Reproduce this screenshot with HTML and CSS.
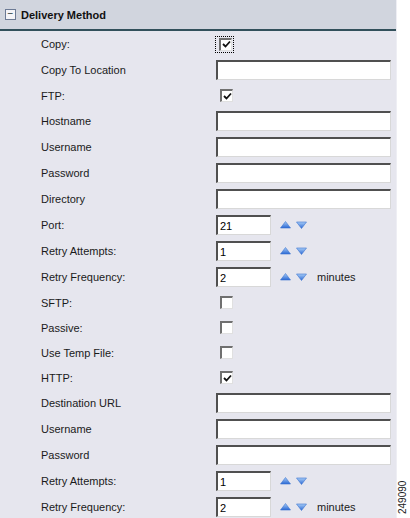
FILE: index.html
```html
<!DOCTYPE html>
<html lang="en">
<head>
    <meta charset="UTF-8">
    <title>Delivery Method</title>
    <link rel="stylesheet" href="styles.css">
</head>
<body>
    <div class="panel">
        <div class="panel-header">
            <span class="toggle">&minus;</span>
            <span class="title">Delivery Method</span>
        </div>
        <div class="rows">
            <div class="row"><label>Copy:</label><span class="focus"><span class="check on"></span></span></div>
            <div class="row"><label>Copy To Location</label><input type="text" class="wide"></div>
            <div class="row short"><label>FTP:</label><span class="check on"></span></div>
            <div class="row"><label>Hostname</label><input type="text" class="wide"></div>
            <div class="row"><label>Username</label><input type="text" class="wide"></div>
            <div class="row"><label>Password</label><input type="text" class="wide"></div>
            <div class="row"><label>Directory</label><input type="text" class="wide"></div>
            <div class="row"><label>Port:</label><input type="text" class="small" value="21"><span class="spin"></span></div>
            <div class="row"><label>Retry Attempts:</label><input type="text" class="small" value="1"><span class="spin"></span></div>
            <div class="row"><label>Retry Frequency:</label><input type="text" class="small" value="2"><span class="spin"></span><span class="unit">minutes</span></div>
            <div class="row short"><label>SFTP:</label><span class="check"></span></div>
            <div class="row short"><label>Passive:</label><span class="check"></span></div>
            <div class="row short"><label>Use Temp File:</label><span class="check"></span></div>
            <div class="row short"><label>HTTP:</label><span class="check on"></span></div>
            <div class="row"><label>Destination URL</label><input type="text" class="wide"></div>
            <div class="row"><label>Username</label><input type="text" class="wide"></div>
            <div class="row"><label>Password</label><input type="text" class="wide"></div>
            <div class="row"><label>Retry Attempts:</label><input type="text" class="small" value="1"><span class="spin"></span></div>
            <div class="row"><label>Retry Frequency:</label><input type="text" class="small" value="2"><span class="spin"></span><span class="unit">minutes</span></div>
        </div>
    </div>
    <div class="figure-id">249090</div>

    <script>
        // arrow pair for each spinner
        var arrows = '<svg width="30" height="10" viewBox="0 0 30 10">' +
            '<defs><linearGradient id="g" x1="0" y1="0" x2="0" y2="1">' +
            '<stop offset="0" stop-color="#a8ccf6"/><stop offset="1" stop-color="#2a68d4"/></linearGradient></defs>' +
            '<path d="M0.5 8 L5.5 1.5 L10.5 8 Z" fill="url(#g)" stroke="#3a74d0" stroke-width="0.6"/>' +
            '<path d="M16.5 2 L21.5 8.5 L26.5 2 Z" fill="url(#g)" stroke="#3a74d0" stroke-width="0.6"/>' +
            '</svg>';
        document.querySelectorAll('.spin').forEach(function(el) {
            el.innerHTML = arrows;
        });
        document.querySelectorAll('.check.on').forEach(function(el) {
            el.innerHTML = '<svg width="9" height="9" viewBox="0 0 9 9"><path d="M1 4 L3.5 6.5 L8 1.5" fill="none" stroke="#111" stroke-width="1.8"/></svg>';
        });
    </script>
</body>
</html>
```

FILE: styles.css
```css
body {
    margin: 0;
    background-color: #fff;
    font-family: "Liberation Sans", Arial, sans-serif;
    font-size: 11px;
    color: #000;
}
.panel {
    width: 396px;
    height: 518px;
    overflow: hidden;
    background-color: #e6e6ee;
    border-right: 1px solid #eeeef4;
}
.panel-header {
    height: 29px;
    background-color: #d1d5de;
    border-bottom: 2px solid #32505b;
    display: flex;
    align-items: center;
    padding-left: 5px;
}
.toggle {
    width: 9px;
    height: 9px;
    border: 1px solid #6c7a94;
    background-color: #f4f4f8;
    color: #233;
    font-size: 10px;
    line-height: 8px;
    text-align: center;
    margin-right: 5px;
}
.title {
    font-weight: bold;
    font-size: 11px;
    color: #111;
}
.row {
    display: flex;
    align-items: center;
    height: 26px;
}
.row.short {
    height: 25px;
}
label {
    width: 175px;
    padding-left: 41px;
    color: #1a1a1a;
}
input {
    box-sizing: border-box;
    height: 20px;
    margin: 0;
    padding: 1px 2px;
    border-style: solid;
    border-width: 2px 1px 1px 2px;
    border-color: #505050 #d8d8d8 #d8d8d8 #505050;
    background-color: #fff;
    font-family: "Liberation Sans", Arial, sans-serif;
    font-size: 11px;
    color: #000;
}
input.wide {
    width: 175px;
}
input.small {
    width: 55px;
}
.spin {
    display: flex;
    margin-left: 9px;
}
.unit {
    margin-left: 7px;
    color: #1a1a1a;
}
.check {
    box-sizing: border-box;
    width: 13px;
    height: 13px;
    margin-left: 4px;
    border-style: solid;
    border-width: 2px 1px 1px 2px;
    border-color: #707070 #e0e0e0 #e0e0e0 #707070;
    background-color: #fff;
    display: flex;
    align-items: center;
    justify-content: center;
}
.focus {
    display: flex;
    padding: 1px;
    outline: 1px dotted #000;
}
.focus .check {
    margin-left: 2px;
}
.figure-id {
    position: absolute;
    left: 397px;
    top: 478px;
    width: 12px;
    height: 38px;
    writing-mode: vertical-rl;
    transform: rotate(180deg);
    font-size: 10px;
    color: #222;
    text-align: center;
}
```
